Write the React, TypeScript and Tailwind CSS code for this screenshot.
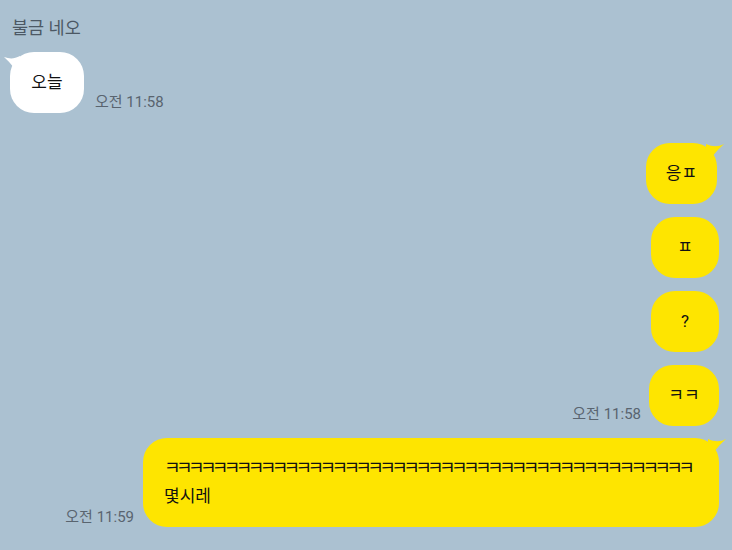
import React from "react";

const font = { fontFamily: 'Roboto, "Noto Sans CJK KR", "Noto Sans", sans-serif' };

function WhiteTail() {
  return (
    <svg className="absolute left-[-6px] top-[3px]" width="20" height="24" viewBox="0 0 20 24">
      <path d="M0 2 C6 4 10 4 16 1 L16 22 C12 15 7 8 0 2 Z" fill="#ffffff" />
    </svg>
  );
}

function YellowTail() {
  return (
    <svg className="absolute right-[-7px] top-[0px]" width="22" height="24" viewBox="0 0 22 24">
      <path d="M22 1 C16 4 11 4 4 1 L4 22 C9 15 14 8 22 1 Z" fill="#fee500" />
    </svg>
  );
}

function YBubble({ text, tail, w }: { text: string; tail?: boolean; w?: string }) {
  return (
    <div className={"relative h-[61px] flex items-center justify-center rounded-[24px] bg-[#fee500] text-[17px] text-[#111111] " + (w ?? "w-[68px]")}>
      {tail && <YellowTail />}
      <span className="relative">{text}</span>
    </div>
  );
}

export default function App() {
  const kk = "ㅋ".repeat(44);
  return (
    <div style={font} className="w-[732px] h-[550px] bg-[#abc1d1] overflow-hidden flex flex-col">
      <div className="pt-[16px] pl-[12px] text-[17.5px] leading-[24px] text-[#4c5864]">불금 네오</div>
      <div className="mt-[12px] pl-[10px] flex items-end">
        <div className="relative h-[61px] w-[74px] flex items-center justify-center rounded-[24px] bg-white text-[17px] text-[#111111]">
          <WhiteTail />
          <span className="relative">오늘</span>
        </div>
        <div className="ml-[11px] mb-[3px] text-[15px] leading-[16px] text-[#59646f]">오전 11:58</div>
      </div>
      <div className="mt-[30px] pr-[13px] flex flex-col items-end gap-[13px]">
        <div className="mr-[2px]">
          <YBubble text="응ㅍ" tail w="w-[71px]" />
        </div>
        <YBubble text="ㅍ" />
        <YBubble text="?" />
        <div className="flex items-end gap-[8px]">
          <div className="mb-[4px] text-[15px] leading-[16px] text-[#59646f]">오전 11:58</div>
          <YBubble text="ㅋㅋ" w="w-[70px]" />
        </div>
        <div className="flex items-end gap-[9px] mt-[-1px]">
          <div className="mb-[2px] text-[15px] leading-[16px] text-[#59646f]">오전 11:59</div>
          <div className="relative w-[576px] h-[89px] rounded-[24px] bg-[#fee500] pl-[21px] pt-[15px] text-[17px] leading-[29px] text-[#111111]">
            <YellowTail />
            <div className="relative text-[18px] tracking-[-4.6px] whitespace-nowrap">{kk}</div>
            <div className="relative">몇시레</div>
          </div>
        </div>
      </div>
    </div>
  );
}
